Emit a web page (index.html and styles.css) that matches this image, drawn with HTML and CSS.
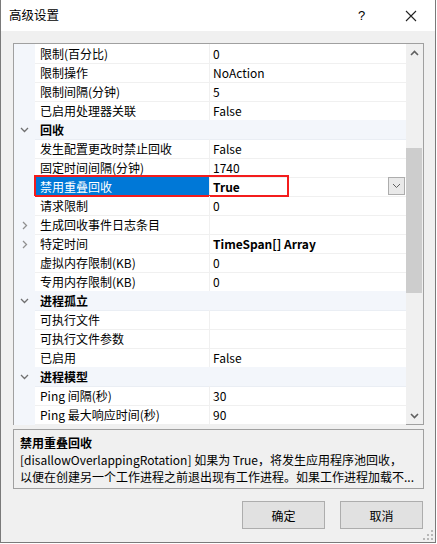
FILE: index.html
```html
<!DOCTYPE html>
<html lang="zh-CN">
<head>
<meta charset="utf-8">
<title>高级设置</title>
<link rel="stylesheet" href="styles.css">
</head>
<body>
<div class="window">
  <div class="titlebar">
    <span class="title">高级设置</span>
    <span class="help">?</span>
    <span class="close"><svg width="12" height="12" viewBox="0 0 12 12"><path d="M1 1L11 11M11 1L1 11" stroke="#222" stroke-width="1.1" fill="none"/></svg></span>
  </div>
  <div class="content">
    <div class="grid">
      <div class="rows">
        <div class="row"><div class="gut"></div><div class="name">限制(百分比)</div><div class="val">0</div></div>
        <div class="row"><div class="gut"></div><div class="name">限制操作</div><div class="val">NoAction</div></div>
        <div class="row"><div class="gut"></div><div class="name">限制间隔(分钟)</div><div class="val">5</div></div>
        <div class="row"><div class="gut"></div><div class="name">已启用处理器关联</div><div class="val">False</div></div>
        <div class="row cat"><div class="gut"><svg class="chev" width="9" height="6" viewBox="0 0 9 6"><path d="M1 1L4.5 4.5L8 1" stroke="#707070" stroke-width="1.3" fill="none"/></svg></div><div class="name">回收</div><div class="val"></div></div>
        <div class="row"><div class="gut"></div><div class="name">发生配置更改时禁止回收</div><div class="val">False</div></div>
        <div class="row"><div class="gut"></div><div class="name">固定时间间隔(分钟)</div><div class="val">1740</div></div>
        <div class="row sel"><div class="gut"></div><div class="name">禁用重叠回收</div><div class="val bold">True<span class="dd"><svg width="9" height="6" viewBox="0 0 9 6"><path d="M1 1L4.5 4.5L8 1" stroke="#606060" stroke-width="1" fill="none"/></svg></span></div><div class="mark"></div></div>
        <div class="row"><div class="gut"></div><div class="name">请求限制</div><div class="val">0</div></div>
        <div class="row"><div class="gut"><svg class="chev" width="6" height="9" viewBox="0 0 6 9"><path d="M1 1L4.5 4.5L1 8" stroke="#909090" stroke-width="1.3" fill="none"/></svg></div><div class="name">生成回收事件日志条目</div><div class="val"></div></div>
        <div class="row"><div class="gut"><svg class="chev" width="6" height="9" viewBox="0 0 6 9"><path d="M1 1L4.5 4.5L1 8" stroke="#909090" stroke-width="1.3" fill="none"/></svg></div><div class="name">特定时间</div><div class="val bold">TimeSpan[] Array</div></div>
        <div class="row"><div class="gut"></div><div class="name">虚拟内存限制(KB)</div><div class="val">0</div></div>
        <div class="row"><div class="gut"></div><div class="name">专用内存限制(KB)</div><div class="val">0</div></div>
        <div class="row cat"><div class="gut"><svg class="chev" width="9" height="6" viewBox="0 0 9 6"><path d="M1 1L4.5 4.5L8 1" stroke="#707070" stroke-width="1.3" fill="none"/></svg></div><div class="name">进程孤立</div><div class="val"></div></div>
        <div class="row"><div class="gut"></div><div class="name">可执行文件</div><div class="val"></div></div>
        <div class="row"><div class="gut"></div><div class="name">可执行文件参数</div><div class="val"></div></div>
        <div class="row"><div class="gut"></div><div class="name">已启用</div><div class="val">False</div></div>
        <div class="row cat"><div class="gut"><svg class="chev" width="9" height="6" viewBox="0 0 9 6"><path d="M1 1L4.5 4.5L8 1" stroke="#707070" stroke-width="1.3" fill="none"/></svg></div><div class="name">进程模型</div><div class="val"></div></div>
        <div class="row"><div class="gut"></div><div class="name">Ping 间隔(秒)</div><div class="val">30</div></div>
        <div class="row"><div class="gut"></div><div class="name">Ping 最大响应时间(秒)</div><div class="val">90</div></div>
      </div>
      <div class="scrollbar">
        <div class="arrow"><svg width="9" height="6" viewBox="0 0 9 6"><path d="M1 5L4.5 1.5L8 5" stroke="#606060" stroke-width="1.6" fill="none"/></svg></div>
        <div class="track"><div class="thumb"></div></div>
        <div class="arrow"><svg width="9" height="6" viewBox="0 0 9 6"><path d="M1 1L4.5 4.5L8 1" stroke="#606060" stroke-width="1.6" fill="none"/></svg></div>
      </div>
    </div>
    <div class="desc">
      <div class="desc-title">禁用重叠回收</div>
      <div class="desc-text">[disallowOverlappingRotation] 如果为 True，将发生应用程序池回收，</div>
      <div class="desc-text">以便在创建另一个工作进程之前退出现有工作进程。如果工作进程加载不...</div>
    </div>
    <div class="buttons">
      <div class="btn">确定</div>
      <div class="btn">取消</div>
    </div>
  </div>
  <svg class="grip" width="10" height="10" viewBox="0 0 10 10"><g fill="#b8b8b8"><rect x="8" y="0" width="2" height="2"/><rect x="4" y="4" width="2" height="2"/><rect x="8" y="4" width="2" height="2"/><rect x="0" y="8" width="2" height="2"/><rect x="4" y="8" width="2" height="2"/><rect x="8" y="8" width="2" height="2"/></g></svg>
</div>
</body>
</html>
```
FILE: styles.css
```css
* { box-sizing: border-box; }
html, body { margin: 0; padding: 0; background: #ffffff; }
body {
  font-family: "Noto Sans CJK SC", "Noto Sans", sans-serif;
  font-size: 12px;
  color: #000;
}
.window {
  position: relative;
  width: 436px;
  height: 543px;
  border-left: 1px solid #7a7a7a;
  border-right: 1px solid #7a7a7a;
  border-bottom: 1px solid #7a7a7a;
  background: #f0f0f0;
  display: flex;
  flex-direction: column;
}
.titlebar {
  height: 31px;
  background: #ffffff;
  display: flex;
  align-items: center;
  flex-shrink: 0;
}
.title {
  margin-left: 8px;
  font-size: 12.5px;
  flex: 1;
  line-height: 1;
}
.help {
  font-family: "Liberation Sans", sans-serif;
  font-size: 13px;
  width: 20px;
  margin-right: 27px;
}
.close {
  display: flex;
  width: 12px;
  margin-right: 18px;
}
.content {
  padding: 12px 11px 0 12px;
  display: flex;
  flex-direction: column;
}
.grid {
  width: 411px;
  height: 382px;
  border: 1px solid #a0a0a0;
  background: #ffffff;
  display: flex;
}
.rows {
  width: 392px;
  display: flex;
  flex-direction: column;
}
.row {
  position: relative;
  display: grid;
  grid-template-columns: 21px 175px 196px;
  height: 19px;
  line-height: 18px;
}
.gut {
  background: #f3f6fb;
  display: flex;
  align-items: center;
  justify-content: center;
}
.name {
  padding-left: 5px;
  padding-top: 1px;
  border-bottom: 1px solid #f0f0f0;
  border-right: 1px solid #f0f0f0;
  white-space: nowrap;
}
.val {
  padding-left: 3px;
  padding-top: 1px;
  border-bottom: 1px solid #f0f0f0;
  white-space: nowrap;
  position: relative;
}
.bold { font-weight: bold; }
.cat .name, .cat .val { background: #f3f6fb; border-color: #f3f6fb; }
.cat .name { font-weight: bold; border-bottom-color: #eaeef4; }
.cat .val { border-bottom-color: #eaeef4; }
.sel .name { background: #0078d7; color: #ffffff; }
.dd {
  position: absolute;
  right: 1px;
  top: 0;
  width: 17px;
  height: 18px;
  border: 1px solid #adadad;
  background: #e9e9e9;
  display: flex;
  align-items: center;
  justify-content: center;
}
.mark {
  position: absolute;
  left: 20px;
  top: -2px;
  width: 255px;
  height: 22px;
  border: 2px solid #f41c1c;
  pointer-events: none;
}
.scrollbar {
  width: 17px;
  background: #f0f0f0;
  display: flex;
  flex-direction: column;
}
.arrow {
  height: 17px;
  display: flex;
  align-items: center;
  justify-content: center;
}
.track {
  flex: 1;
  padding-top: 87px;
}
.thumb {
  height: 145px;
  margin: 0 1px 0 0;
  background: #cdcdcd;
}
.desc {
  margin-top: 4px;
  width: 411px;
  height: 60px;
  border: 1px solid #a0a0a0;
  padding: 4px 0 0 6px;
  line-height: 17px;
}
.desc-title { font-weight: bold; }
.desc-text { white-space: nowrap; }
.buttons {
  margin-top: 12px;
  display: flex;
  justify-content: flex-end;
  gap: 15px;
  padding-right: 1px;
}
.btn {
  width: 83px;
  height: 28px;
  border: 1px solid #adadad;
  background: #e1e1e1;
  display: flex;
  align-items: center;
  justify-content: center;
}
.grip {
  position: absolute;
  right: 2px;
  bottom: 2px;
}
```
